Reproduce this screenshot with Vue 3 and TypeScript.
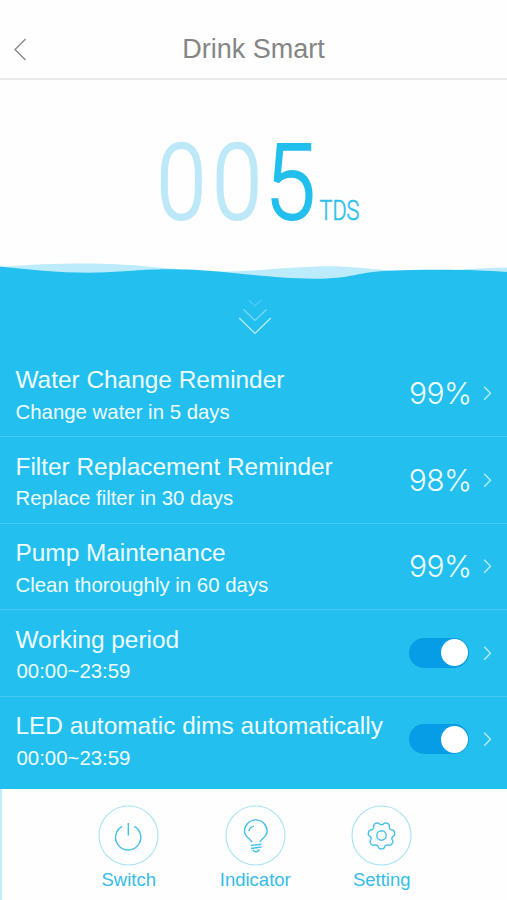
<script setup lang="ts">
interface Reminder {
  title: string
  detail: string
  percent?: string
}

const rows: Reminder[] = [
  { title: 'Water Change Reminder', detail: 'Change water in 5 days', percent: '99%' },
  { title: 'Filter Replacement Reminder', detail: 'Replace filter in 30 days', percent: '98%' },
  { title: 'Pump Maintenance', detail: 'Clean thoroughly in 60 days', percent: '99%' },
  { title: 'Working period', detail: '00:00~23:59' },
  { title: 'LED automatic dims automatically', detail: '00:00~23:59' },
]

// Closed outline of the gear, sampled around its centre with seven soft teeth.
const gearPath: string = (() => {
  const points: string[] = []
  for (let i = 0; i < 168; i++) {
    const a = (i / 168) * Math.PI * 2
    const wave = Math.tanh(1.7 * (Math.cos(7 * (a - Math.PI / 2)) + 0.25))
    const r = 12 + 1.4 * wave
    points.push(`${(30 + r * Math.cos(a)).toFixed(2)} ${(30 + r * Math.sin(a)).toFixed(2)}`)
  }
  return `M${points.join('L')}Z`
})()
</script>

<template>
  <main class="screen">
    <header class="bar">
      <svg class="back" width="14" height="24" viewBox="0 0 14 24">
        <path d="M12.500 2 2 12.500l10.500 10.500" />
      </svg>
      <h1>Drink Smart</h1>
    </header>

    <section class="reading">
      <svg width="507" height="180" viewBox="0 80 507 180">
        <g class="digits">
          <text class="pale" transform="translate(156.600 219) scale(.85 1)">0</text>
          <text class="pale" transform="translate(212.200 219) scale(.85 1)">0</text>
          <text transform="translate(264.700 219) scale(.87 1)">5</text>
        </g>
        <text class="unit" transform="translate(319.500 219.500) scale(.8 1)">TDS</text>
      </svg>
    </section>

    <svg class="waves" width="507" height="22" viewBox="0 260 507 22">
      <path class="crest" d="M0 267C30 264.500 55 263.500 85 263.500C130 263.500 155 268 210 271.500C245 273 290 266.300 330 266.300C350 266.300 368 269 385 270C440 271.500 470 268.500 507 267.500V282H0Z" />
      <path class="sea" d="M0 266.500C30 269.500 55 272.700 90 272.700C120 272.700 137 269.300 168 269.300C205 269.300 225 272.500 253 275C273 276.800 290 278.700 315 278.700C352 278.700 356 272.500 385 271C425 268.800 475 269.500 507 272V282H0Z" />
    </svg>

    <section class="panel">
      <div class="pull">
        <svg width="34" height="38" viewBox="0 0 34 38">
          <path class="c1" d="M11.500 2 18 8l6.500-6" />
          <path class="c2" d="M6.500 11.500 18 22.500 29.500 11.500" />
          <path class="c3" d="M2.200 20 18 35.500 33.800 20" />
        </svg>
      </div>
      <ul>
        <li v-for="row in rows" :key="row.title">
          <div class="copy">
            <h2>{{ row.title }}</h2>
            <p :class="{ time: !row.percent }">{{ row.detail }}</p>
          </div>
          <span v-if="row.percent" class="percent">{{ row.percent }}</span>
          <span v-else class="toggle"><i></i></span>
          <svg class="go" width="9" height="16" viewBox="0 0 9 16">
            <path d="M1.200 1.700 7.500 8.200l-6.300 6.500" />
          </svg>
        </li>
      </ul>
    </section>

    <footer>
      <div class="action">
        <svg width="61" height="61" viewBox="-.5 -.5 61 61">
          <circle class="ring" cx="30" cy="30" r="29.500" />
          <path d="M23.700 20.800A12.600 12.600 0 1 0 35.700 20.800M29.800 17.500V30" />
        </svg>
        <span>Switch</span>
      </div>
      <div class="action">
        <svg width="61" height="61" viewBox="-.5 -.5 61 61">
          <circle class="ring" cx="30" cy="30" r="29.500" />
          <path d="M26.200 36.800C26.200 34 19 31.500 19 25.700A11.300 11.300 0 0 1 41.600 25.700C41.600 31.500 34.500 34 34.500 36.800M23.500 25.500Q24 21.400 28.500 20.600M25.500 40 36 38.700M25.500 43 36 41.500M27.300 44.500Q30.500 48.500 34 44" />
        </svg>
        <span>Indicator</span>
      </div>
      <div class="action">
        <svg width="61" height="61" viewBox="-.5 -.5 61 61">
          <circle class="ring" cx="30" cy="30" r="29.500" />
          <path :d="gearPath" />
          <circle cx="30" cy="30" r="4.700" />
        </svg>
        <span>Setting</span>
      </div>
    </footer>
  </main>
</template>

<style>
body {
  margin: 0;
  background: #fff;
}
</style>

<style scoped>
.screen {
  width: 507px;
  height: 900px;
  overflow: hidden;
  display: flex;
  flex-direction: column;
  background: #fefefe;
  font-family: "Liberation Sans", Arial, sans-serif;
}
svg {
  display: block;
  flex: none;
  fill: none;
}
h1, h2, p, ul {
  margin: 0;
  padding: 0;
  font-weight: 400;
}
.bar {
  box-sizing: border-box;
  height: 80px;
  flex: none;
  display: grid;
  grid-template-columns: 40px 1fr 40px;
  align-items: center;
  padding-top: 20px;
  border-bottom: 2px solid #e9e9e9;
}
.back {
  margin-left: 13px;
  stroke: #858585;
  stroke-width: 1.300;
}
h1 {
  text-align: center;
  font-size: 27px;
  line-height: 32px;
  color: #858585;
}
.reading {
  height: 180px;
  flex: none;
}
.digits {
  font-family: Roboto, sans-serif;
  font-size: 105.500px;
  font-weight: 300;
  fill: #22bfee;
  stroke: #22bfee;
  stroke-width: 1.900;
}
.digits .pale {
  fill: #bce8f8;
  stroke: #bce8f8;
}
.unit {
  font-family: Roboto, sans-serif;
  font-size: 27px;
  font-weight: 300;
  fill: #30c0ec;
  stroke: #30c0ec;
  stroke-width: .6;
}
.crest {
  fill: #bcebfb;
}
.sea {
  fill: #22bfef;
}
.panel {
  height: 507px;
  flex: none;
  background: #22bfef;
}
.pull {
  height: 68.600px;
  box-sizing: border-box;
  padding-top: 16px;
  display: flex;
  justify-content: center;
}
.pull path {
  stroke: #d9f8ff;
  stroke-width: 1.200;
}
.pull .c1 {
  opacity: .25;
}
.pull .c2 {
  opacity: .5;
}
.pull .c3 {
  opacity: .85;
}
ul {
  list-style: none;
}
li {
  box-sizing: border-box;
  height: 86.500px;
  padding: 0 15px 0 15.500px;
  display: flex;
  align-items: center;
  color: #effdff;
  border-bottom: 1.500px solid #46caf2;
}
li:last-child {
  border-bottom-color: transparent;
}
.copy {
  flex: 1;
  padding-top: 3px;
}
h2 {
  font-size: 24.400px;
  line-height: 30px;
  white-space: nowrap;
}
p {
  margin-top: 3.500px;
  font-size: 20.400px;
  line-height: 26px;
}
.time {
  padding-left: 1px;
}
.percent {
  margin-right: -2.500px;
  font-family: Inter, sans-serif;
  font-size: 30px;
  font-weight: 300;
  line-height: 36px;
  letter-spacing: -.6px;
}
.toggle {
  width: 60px;
  height: 30px;
  border-radius: 15px;
  background: #079ce6;
  display: flex;
  justify-content: flex-end;
  align-items: center;
}
.toggle i {
  width: 27px;
  height: 27px;
  margin-right: 1px;
  border-radius: 50%;
  background: #fff;
}
.go {
  margin-left: 14px;
  stroke: #b9efff;
  stroke-width: 1.300;
}
footer {
  flex: 1;
  box-sizing: border-box;
  padding: 16px 62px 0 63.500px;
  border-left: 2px solid #bdecfa;
  display: grid;
  grid-template-columns: repeat(3, 1fr);
}
.action {
  display: flex;
  flex-direction: column;
  align-items: center;
  gap: 3px;
  font-size: 18.500px;
  line-height: 22px;
  color: #36bce9;
}
.action svg {
  stroke: #43bfe9;
  stroke-width: 1.400;
}
.action .ring {
  stroke: #a5e2f6;
  stroke-width: 1.100;
}
</style>
